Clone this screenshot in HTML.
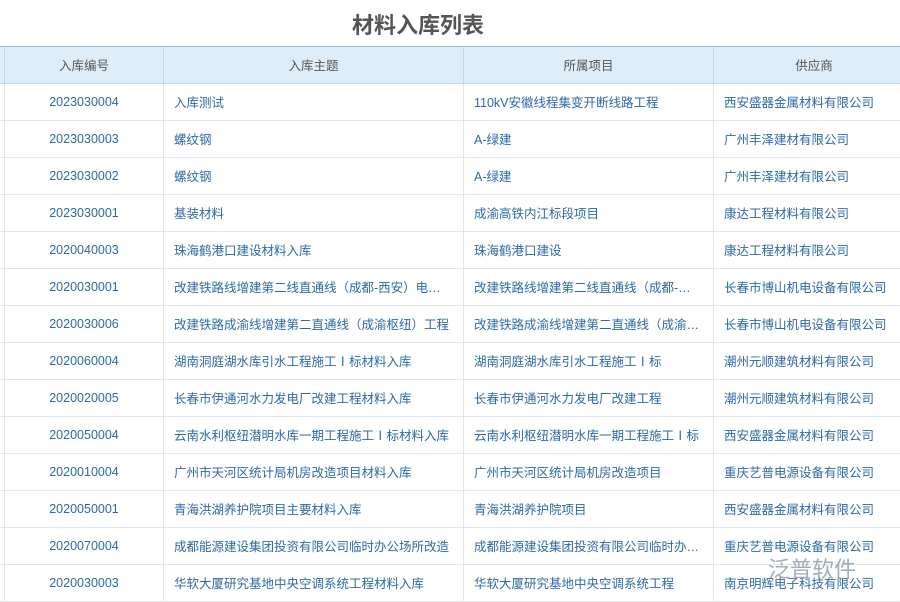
<html><head><style>
body{margin:0;width:900px;height:600px;overflow:hidden;background:#fff;font-family:"Liberation Sans","Noto Sans CJK SC",sans-serif;}
.t{position:absolute;top:8px;left:0;width:836px;text-align:center;font-size:22px;font-weight:bold;color:#555;}
table{position:absolute;top:46px;left:-1px;width:915px;border-collapse:collapse;table-layout:fixed;}
td,th{border:1px solid #e2e6ea;height:36px;box-sizing:border-box;padding:0 10px 1px;font-size:12.5px;color:#2c6aa6;white-space:nowrap;overflow:hidden;text-overflow:ellipsis;font-weight:normal;}
tr{height:37px}
th{background:#ddeefa;color:#555;text-align:center;border-color:#c3d7e8;border-top:1px solid #9dbbd4;}
td.c{text-align:center}
.logo{position:absolute;left:768px;top:552px;font-size:22px;color:#8a99aa;opacity:.8}
</style></head><body>
<div class="t">材料入库列表</div>
<table>
<colgroup><col style="width:5px"><col style="width:159px"><col style="width:300px"><col style="width:250px"><col style="width:201px"></colgroup>
<tr><th></th><th>入库编号</th><th>入库主题</th><th>所属项目</th><th>供应商</th></tr>
<tr><td></td><td class="c">2023030004</td><td>入库测试</td><td>110kV安徽线程集变开断线路工程</td><td>西安盛器金属材料有限公司</td></tr>
<tr><td></td><td class="c">2023030003</td><td>螺纹钢</td><td>A-绿建</td><td>广州丰泽建材有限公司</td></tr>
<tr><td></td><td class="c">2023030002</td><td>螺纹钢</td><td>A-绿建</td><td>广州丰泽建材有限公司</td></tr>
<tr><td></td><td class="c">2023030001</td><td>基装材料</td><td>成渝高铁内江标段项目</td><td>康达工程材料有限公司</td></tr>
<tr><td></td><td class="c">2020040003</td><td>珠海鹤港口建设材料入库</td><td>珠海鹤港口建设</td><td>康达工程材料有限公司</td></tr>
<tr><td></td><td class="c">2020030001</td><td>改建铁路线增建第二线直通线（成都-西安）电化工程</td><td>改建铁路线增建第二线直通线（成都-西安）</td><td>长春市博山机电设备有限公司</td></tr>
<tr><td></td><td class="c">2020030006</td><td>改建铁路成渝线增建第二直通线（成渝枢纽）工程</td><td>改建铁路成渝线增建第二直通线（成渝枢纽）</td><td>长春市博山机电设备有限公司</td></tr>
<tr><td></td><td class="c">2020060004</td><td>湖南洞庭湖水库引水工程施工Ⅰ标材料入库</td><td>湖南洞庭湖水库引水工程施工Ⅰ标</td><td>潮州元顺建筑材料有限公司</td></tr>
<tr><td></td><td class="c">2020020005</td><td>长春市伊通河水力发电厂改建工程材料入库</td><td>长春市伊通河水力发电厂改建工程</td><td>潮州元顺建筑材料有限公司</td></tr>
<tr><td></td><td class="c">2020050004</td><td>云南水利枢纽潜明水库一期工程施工Ⅰ标材料入库</td><td>云南水利枢纽潜明水库一期工程施工Ⅰ标</td><td>西安盛器金属材料有限公司</td></tr>
<tr><td></td><td class="c">2020010004</td><td>广州市天河区统计局机房改造项目材料入库</td><td>广州市天河区统计局机房改造项目</td><td>重庆艺普电源设备有限公司</td></tr>
<tr><td></td><td class="c">2020050001</td><td>青海洪湖养护院项目主要材料入库</td><td>青海洪湖养护院项目</td><td>西安盛器金属材料有限公司</td></tr>
<tr><td></td><td class="c">2020070004</td><td>成都能源建设集团投资有限公司临时办公场所改造</td><td>成都能源建设集团投资有限公司临时办公场所</td><td>重庆艺普电源设备有限公司</td></tr>
<tr><td></td><td class="c">2020030003</td><td>华软大厦研究基地中央空调系统工程材料入库</td><td>华软大厦研究基地中央空调系统工程</td><td>南京明辉电子科技有限公司</td></tr>
</table>
<div class="logo">泛普软件</div>
</body></html>
